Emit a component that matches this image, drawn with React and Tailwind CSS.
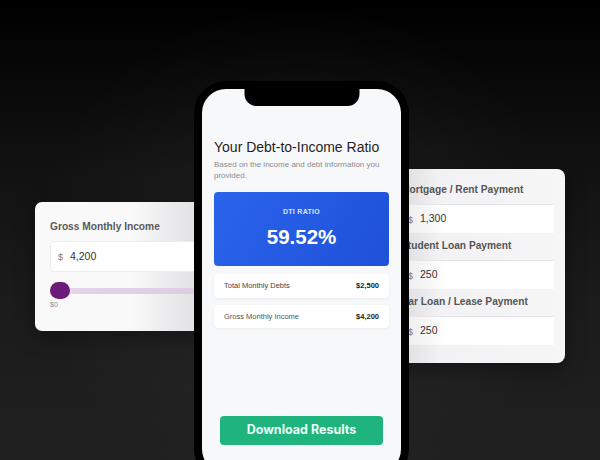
import React from "react";

const sans = { fontFamily: '"Liberation Sans", Arial, sans-serif' };

function MoneyInput({ value, className = "" }) {
  return (
    <div
      className={`flex items-center bg-white border border-[#ececee] rounded-[4px] ${className}`}
    >
      <span className="ml-[7px] mt-[3px] text-[9px] text-[#777]">$</span>
      <span className="ml-[7px] text-[10.5px] text-[#333]">{value}</span>
    </div>
  );
}

function IncomeCard() {
  return (
    <div className="absolute left-[35px] top-[202px] w-[175px] h-[129px] rounded-[7px] bg-[linear-gradient(to_right,#f9f9fa_55%,#dcdcdf)] pl-[15px] pt-[19px] shadow-[0_6px_20px_rgba(0,0,0,0.35)]">
      <div className="text-[10.2px] leading-[12px] font-bold text-[#5a5a5a]">
        Gross Monthly Income
      </div>
      <MoneyInput value="4,200" className="mt-[8px] h-[31px] w-[170px]" />
      <div className="relative mt-[10px] h-[17px]">
        <div className="absolute left-0 right-0 top-[6px] h-[6px] rounded-full bg-[linear-gradient(to_right,#e6d6ea,#dccbe2)]" />
        <div className="absolute left-0 top-0 w-[20px] h-[17px] rounded-full bg-[#6b1b79]" />
      </div>
      <div className="mt-[1px] text-[7px] leading-[9px] text-[#8a8a8a]">$0</div>
    </div>
  );
}

function DebtCard() {
  const rows = [
    ["Mortgage / Rent Payment", "1,300"],
    ["Student Loan Payment", "250"],
    ["Car Loan / Lease Payment", "250"],
  ];
  return (
    <div className="absolute left-[386px] top-[169px] w-[179px] h-[194px] rounded-[8px] bg-[linear-gradient(to_right,#d6d6d9,#f2f2f4_30%,#f6f6f7)] pl-[15px] pr-[11px] pt-[15px] shadow-[0_6px_20px_rgba(0,0,0,0.35)]">
      {rows.map(([label, value], i) => (
        <div key={label} className={i > 0 ? "mt-[7px]" : ""}>
          <div className="text-[10.2px] leading-[12px] font-bold text-[#555]">
            {label}
          </div>
          <div className="mt-[8px] h-[29px] flex items-center bg-[linear-gradient(to_right,#ececee,#ffffff_30%)] border-t border-[#e6e6e8]">
            <span className="ml-[7px] mt-[3px] text-[9px] text-[#777]">$</span>
            <span className="ml-[7px] text-[10.5px] text-[#333]">{value}</span>
          </div>
        </div>
      ))}
    </div>
  );
}

function Phone() {
  return (
    <div className="absolute left-[194px] top-[81px] w-[215px] h-[400px] rounded-[32px] bg-black p-[8px] z-10">
      <div className="relative h-full rounded-[24px] bg-[#f7f8fa] overflow-hidden px-[12px] pt-[50px]">
        <div className="absolute left-1/2 -translate-x-1/2 top-0 w-[115px] h-[17px] bg-black rounded-b-[12px]" />
        <div className="text-[14px] leading-[16px] text-[#1f1f1f]">
          Your Debt-to-Income Ratio
        </div>
        <div className="mt-[4px] text-[8px] leading-[11px] text-[#8c8c8c] pr-[2px]">
          Based on the income and debt information you provided.
        </div>
        <div className="mt-[11px] h-[74px] rounded-[4px] bg-[linear-gradient(120deg,#2b64ec,#1f50d9)] flex flex-col items-center pt-[16px]">
          <div className="text-[7px] leading-[8px] font-bold tracking-[0.3px] text-[#dce6ff]">
            DTI RATIO
          </div>
          <div className="mt-[10px] text-[20.5px] leading-[22px] font-bold text-white">
            59.52%
          </div>
        </div>
        <div className="mt-[8px] h-[24px] rounded-[4px] bg-white shadow-[0_1px_3px_rgba(0,0,0,0.06)] flex items-center justify-between px-[10px] text-[7.5px]">
          <span className="text-[#444]">Total Monthly Debts</span>
          <span className="font-bold text-[#222]">$2,500</span>
        </div>
        <div className="mt-[7px] h-[23px] rounded-[4px] bg-white shadow-[0_1px_3px_rgba(0,0,0,0.06)] flex items-center justify-between px-[10px] text-[7.5px]">
          <span className="text-[#555]">Gross Monthly Income</span>
          <span className="font-bold text-[#222]">$4,200</span>
        </div>
        <div className="mt-[88px] mx-[6px] h-[29px] rounded-[4px] bg-[#1fb47d] flex items-center justify-center">
          <span
            className="text-[12.5px] font-bold text-[#eafff5]"
            style={{ fontFamily: "Inter, sans-serif" }}
          >
            Download Results
          </span>
        </div>
      </div>
    </div>
  );
}

export default function App() {
  return (
    <div
      className="relative w-[600px] h-[460px] overflow-hidden bg-[linear-gradient(to_bottom,#000000_0%,#111111_35%,#1b1b1b_65%,#202020_100%)]"
      style={sans}
    >
      <div className="absolute inset-0 bg-[radial-gradient(ellipse_45%_55%_at_50%_55%,rgba(255,255,255,0.05),transparent)]" />
      <IncomeCard />
      <DebtCard />
      <Phone />
    </div>
  );
}
